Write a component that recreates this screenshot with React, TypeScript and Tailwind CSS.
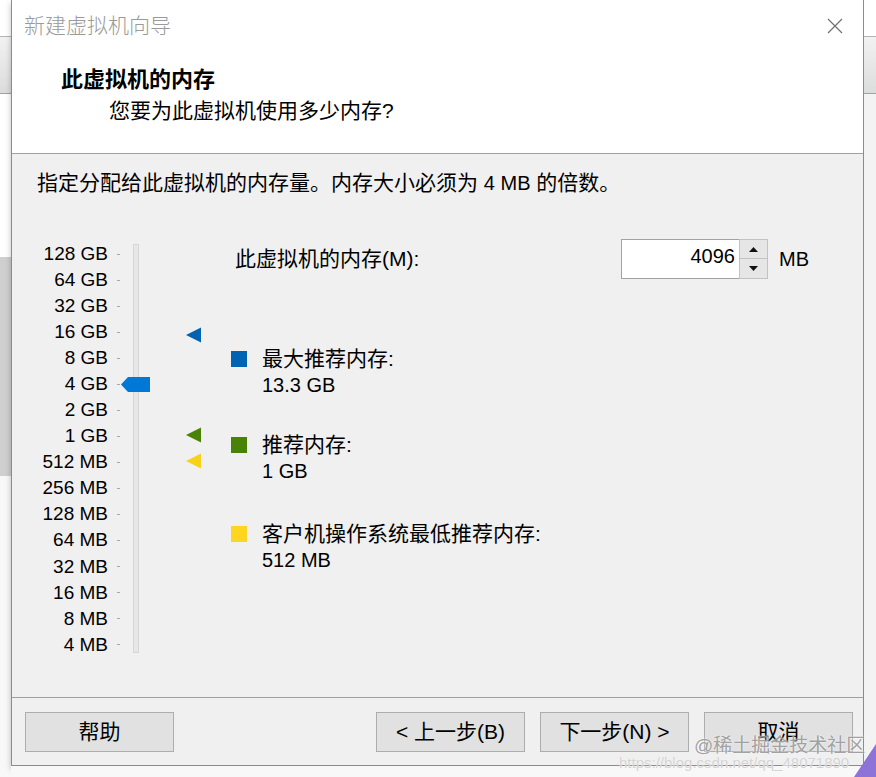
import React from "react";

const FONT = { fontFamily: '"Liberation Sans", "Noto Sans CJK SC", sans-serif' };

const ticks = [
  "128 GB",
  "64 GB",
  "32 GB",
  "16 GB",
  "8 GB",
  "4 GB",
  "2 GB",
  "1 GB",
  "512 MB",
  "256 MB",
  "128 MB",
  "64 MB",
  "32 MB",
  "16 MB",
  "8 MB",
  "4 MB",
];

function Marker({ color, top }: { color: string; top: number }) {
  return (
    <svg className="absolute left-[174px]" style={{ top }} width="16" height="16" viewBox="0 0 16 16">
      <path d="M0 8 L15 0.5 L15 15.5 Z" fill={color} />
    </svg>
  );
}

function Legend({ color, label, value, className }: { color: string; label: string; value: string; className: string }) {
  return (
    <div className={"flex " + className}>
      <div className="w-[16px] h-[16px] mt-[5px]" style={{ background: color }} />
      <div className="ml-[15px] flex flex-col">
        <span className="leading-[26px] text-[21px]">{label}</span>
        <span className="leading-[26px] text-[20px]">{value}</span>
      </div>
    </div>
  );
}

function Btn({ children, className = "" }: { children: React.ReactNode; className?: string }) {
  return (
    <button className={"h-[40px] w-[149px] bg-[#e1e1e1] border border-[#adadad] text-[21px] text-black " + className}>
      {children}
    </button>
  );
}

export default function App() {
  return (
    <div className="relative w-[876px] h-[777px] overflow-hidden flex bg-[#f8f8f8] text-black" style={FONT}>
      {/* background window, left */}
      <div className="w-[11px] flex flex-col">
        <div className="h-[36px] bg-white" />
        <div className="h-[1px] bg-[#b4b4b4]" />
        <div className="h-[56px] bg-gradient-to-b from-[#f2f2f2] to-[#dcdcdc]" />
        <div className="h-[1px] bg-[#8ea6bf]" />
        <div className="h-[163px] bg-white" />
        <div className="h-[219px] bg-[#cfcfcf]" />
        <div className="flex-1 bg-[#f8f8f8]" />
      </div>

      {/* dialog */}
      <div className="w-[853px] flex flex-col">
        <div className="h-[766px] border-x border-b border-[#8c8c8c] flex flex-col shadow-[0_3px_6px_rgba(0,0,0,0.25)]">
          <div className="h-[154px] bg-white border-b border-[#a0a0a0] flex flex-col">
            <div className="h-[52px] flex items-center pl-[12px] pr-[20px]">
              <span className="text-[21px] text-[#9a9a9a] font-light">新建虚拟机向导</span>
              <svg className="ml-auto" width="16" height="16" viewBox="0 0 16 16">
                <path d="M1 1 L15 15 M15 1 L1 15" stroke="#707070" strokeWidth="1.2" />
              </svg>
            </div>
            <div className="pl-[49px] pt-[15px] text-[22px] leading-[26px] font-bold">此虚拟机的内存</div>
            <div className="pl-[97px] mt-[5px] text-[21px] leading-[26px]">您要为此虚拟机使用多少内存?</div>
          </div>

          <div className="h-[544px] bg-[#f0f0f0] border-b border-[#a0a0a0] flex flex-col text-[20px]">
            <div className="pl-[25px] pt-[16px] leading-[26px] text-[21px]">
              指定分配给此虚拟机的内存量。内存大小必须为 <span className="text-[20px]">4 MB</span> 的倍数。
            </div>

            <div className="mt-[45px] flex">
              {/* slider */}
              <div className="relative w-[219px] flex">
                <div className="w-[108px] flex flex-col">
                  {ticks.map((t) => (
                    <div key={t} className="h-[26.07px] flex items-center justify-end">
                      <span className="text-[19px]">{t}</span>
                      <span className="ml-[9px] w-[3px] h-[1px] bg-[#a8a8a8]" />
                    </div>
                  ))}
                </div>
                <div className="ml-[13px] mt-[3px] mb-[5px] w-[6px] bg-[#e7e7e7] border border-[#d6d6d6]" />
                <svg className="absolute left-[109px] top-[136px]" width="29" height="15" viewBox="0 0 29 15">
                  <path d="M0 7.5 L7 0 L29 0 L29 15 L7 15 Z" fill="#0078d7" />
                </svg>
                <Marker color="#0063b1" top={86} />
                <Marker color="#498205" top={186} />
                <Marker color="#f7d218" top={212} />
              </div>

              {/* right */}
              <div className="flex flex-col">
                <div className="h-[40px] mt-[-2px] flex items-center">
                  <span className="pl-[4px] w-[390px] text-[21px]">此虚拟机的内存(M):</span>
                  <div className="flex h-[40px]">
                    <div className="w-[118px] h-[40px] bg-white border border-[#a2a2a2] border-r-0 flex items-center justify-end pr-[4px] pb-[6px]">
                      4096
                    </div>
                    <div className="w-[29px] flex flex-col border border-[#c2c2c2]">
                      <div className="h-[19px] bg-[#e6e6e6] border-b border-[#c2c2c2] flex items-center justify-center">
                        <svg width="9" height="5" viewBox="0 0 9 5">
                          <path d="M0 5 L4.5 0 L9 5 Z" fill="#111" />
                        </svg>
                      </div>
                      <div className="flex-1 bg-[#e6e6e6] flex items-center justify-center">
                        <svg width="9" height="5" viewBox="0 0 9 5">
                          <path d="M0 0 L4.5 5 L9 0 Z" fill="#111" />
                        </svg>
                      </div>
                    </div>
                  </div>
                  <span className="ml-[11px]">MB</span>
                </div>

                <Legend className="mt-[67px]" color="#0063b1" label="最大推荐内存:" value="13.3 GB" />
                <Legend className="mt-[34px]" color="#498205" label="推荐内存:" value="1 GB" />
                <Legend className="mt-[37px]" color="#ffd61f" label="客户机操作系统最低推荐内存:" value="512 MB" />
              </div>
            </div>
          </div>

          <div className="flex-1 bg-[#f0f0f0] flex pt-[14px] pl-[13px]">
            <Btn>帮助</Btn>
            <Btn className="ml-[202px]">&lt; 上一步(B)</Btn>
            <Btn className="ml-[15px]">下一步(N) &gt;</Btn>
            <Btn className="ml-[15px]">取消</Btn>
          </div>
        </div>
        <div className="flex-1 bg-[#f8f8f8]" />
      </div>

      {/* background window, right */}
      <div className="w-[12px] flex flex-col">
        <div className="h-[36px] bg-white" />
        <div className="h-[1px] bg-[#b4b4b4]" />
        <div className="h-[56px] bg-gradient-to-b from-[#f2f2f2] to-[#dcdcdc]" />
        <div className="h-[1px] bg-[#8ea6bf]" />
        <div className="flex-1 bg-[#f3f3f3]" />
      </div>

      {/* watermark */}
      <div className="absolute left-[694px] top-[732px] text-[19px] text-[#8a8a8a]/80 [text-shadow:0_0_2px_#fff]">
        @稀土掘金技术社区
      </div>
      <div className="absolute left-[619px] top-[752px] text-[15px] text-[#c8c8c8]/80 [text-shadow:0_0_1px_#fff]">
        https://blog.csdn.net/qq_48071890
      </div>
      <svg className="absolute right-0 bottom-0" width="22" height="33" viewBox="0 0 22 33">
        <path d="M22 0 L22 33 L0 33 Z" fill="#8d72d8" />
      </svg>
    </div>
  );
}
